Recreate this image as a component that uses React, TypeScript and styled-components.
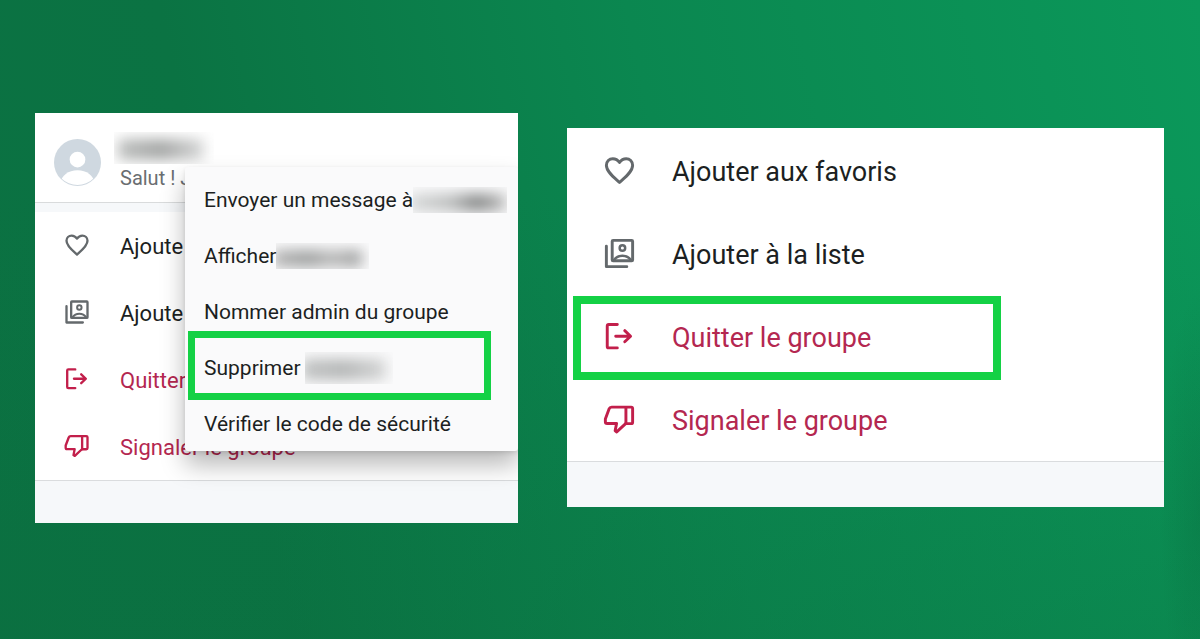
import React from "react";
import styled, { createGlobalStyle } from "styled-components";

const GlobalStyle = createGlobalStyle`
  *, *::before, *::after { box-sizing: border-box; }
  body { margin: 0; font-family: Roboto, "Liberation Sans", sans-serif; }
`;

const Page = styled.main`
  min-height: 100vh;
  display: grid;
  grid-template-columns: 483fr 597fr;
  gap: 49px;
  align-items: center;
  padding: 0 36px 4px 35px;
  background:
    radial-gradient(ellipse 40px 220px at 100% 80%, rgba(8, 96, 54, 0.25), transparent),
    linear-gradient(to top, rgba(10, 110, 62, 0.3), transparent 70%),
    linear-gradient(78deg, #0b7142 0%, #0b7343 22%, #0b8750 57%, #0b985a 100%);
`;

const Card = styled.section`
  position: relative;
  background: #fff;
  overflow: hidden;
`;

const Contact = styled.header`
  display: flex;
  gap: 13px;
  height: 90px;
  padding: 19px 0 0 19px;
  border-bottom: 1px solid #d9dbdc;
`;

const Band = styled.div<{ $height: number; $line?: boolean }>`
  height: ${(p) => p.$height}px;
  background: #f6f8fa;
  border-top: ${(p) => (p.$line ? "1px solid #dadcde" : "0")};
`;

const AvatarIcon = styled.svg`
  width: 47px;
  height: 47px;
  margin-top: 7px;
`;

const Status = styled.p`
  margin: 2px 0 0 6px;
  font-size: 20px;
  line-height: 24px;
  color: #6a6e71;
`;

const Redacted = styled.span<{ $width: number; $height: number }>`
  display: block;
  flex: none;
  overflow: hidden;
  width: ${(p) => p.$width}px;
  height: ${(p) => p.$height}px;
`;

const Smudge = styled.span<{ $from: number; $to: number; $tone: string }>`
  display: block;
  height: 66%;
  margin: 7px ${(p) => 100 - p.$to}% 0 ${(p) => p.$from}%;
  background: ${(p) => p.$tone};
  filter: blur(7px);
`;

const List = styled.ul<{ $top?: number }>`
  list-style: none;
  margin: 0;
  padding: ${(p) => p.$top ?? 0}px 0 0;
`;

const Item = styled.li`
  position: relative;
`;

const Action = styled.button<{ $large?: boolean; $danger?: boolean }>`
  display: flex;
  align-items: center;
  width: 100%;
  height: ${(p) => (p.$large ? 83 : 67)}px;
  gap: ${(p) => (p.$large ? 35 : 29)}px;
  padding: ${(p) => (p.$large ? "2px 0 0 35px" : "2px 0 0 28px")};
  border: 0;
  background: none;
  font: inherit;
  font-size: ${(p) => (p.$large ? 27 : 22)}px;
  white-space: nowrap;
  text-align: left;
  color: ${(p) => (p.$danger ? "#b42750" : "#1c1f22")};

  svg {
    flex: none;
    width: ${(p) => (p.$large ? 35 : 28)}px;
    height: ${(p) => (p.$large ? 35 : 28)}px;
    margin-bottom: 2px;
    color: ${(p) => (p.$danger ? "#c21f4b" : "#64696c")};
  }
`;

const Menu = styled.ul`
  position: absolute;
  top: 54px;
  left: 150px;
  right: 0;
  margin: 0;
  padding: 4px 0 0;
  list-style: none;
  background: #fafafb;
  border-radius: 3px;
  box-shadow: 0 14px 24px rgba(0, 0, 0, 0.28), 0 2px 4px rgba(0, 0, 0, 0.1);
`;

const MenuItem = styled.button<{ $gap?: number }>`
  display: flex;
  align-items: center;
  gap: ${(p) => p.$gap ?? 0}px;
  width: 100%;
  height: 56px;
  padding: 2px 0 0 19px;
  border: 0;
  background: none;
  font: inherit;
  font-size: 21px;
  white-space: nowrap;
  text-align: left;
  color: #1c1f22;
`;

const Highlight = styled.span<{ $inset: string; $weight: number }>`
  position: absolute;
  inset: ${(p) => p.$inset};
  border: ${(p) => p.$weight}px solid #14d145;
  pointer-events: none;
`;

const iconProps = {
  viewBox: "0 0 24 24",
  fill: "none",
  stroke: "currentColor",
  strokeWidth: 2,
  strokeLinecap: "round" as const,
  strokeLinejoin: "round" as const,
  "aria-hidden": true,
};

const HeartIcon = () => (
  <svg {...iconProps}>
    <path d="M12 20.2C8.5 17 3 12.9 3 8.4C3 5.8 5 3.9 7.4 3.9C9.3 3.9 10.9 4.9 12 6.5C13.1 4.9 14.7 3.9 16.6 3.9C19 3.9 21 5.8 21 8.4C21 12.9 15.5 17 12 20.2Z" />
  </svg>
);

const ListIcon = () => (
  <svg {...iconProps}>
    <rect x="7" y="3" width="14" height="14" rx="0.6" />
    <path d="M3 7V21H17" />
    <circle cx="14" cy="8.2" r="1.9" strokeWidth="1.7" />
    <path d="M8.3 16.4C9.5 14.5 11.5 13.5 14 13.5S18.5 14.5 19.7 16.4" strokeWidth="1.8" />
  </svg>
);

const LeaveIcon = () => (
  <svg {...iconProps}>
    <path d="M10.5 3.8H4.6C4 3.8 3.6 4.2 3.6 4.8V18.8C3.6 19.4 4 19.8 4.6 19.8H10.5" />
    <path d="M9.4 11.8H19.2M15.6 8L19.6 11.8L15.6 15.6" />
  </svg>
);

const ReportIcon = () => (
  <svg {...iconProps}>
    <path d="M20 3.5H6.6C5.7 3.5 5.2 3.9 4.9 4.7L2.3 11.6V13.5C2.3 14.2 2.8 14.7 3.5 14.7H10L9 19.8L10.1 20.5L16.2 14.8H20C20.6 14.8 21 14.4 21 13.8V4.5C21 3.9 20.6 3.5 20 3.5Z" />
    <path d="M16.4 3.7V14.7" />
  </svg>
);

const actions = [
  { label: "Ajouter aux favoris", short: "Ajoute", Icon: HeartIcon, danger: false },
  { label: "Ajouter à la liste", short: "Ajoute", Icon: ListIcon, danger: false },
  { label: "Quitter le groupe", short: "Quitter", Icon: LeaveIcon, danger: true },
  { label: "Signaler le groupe", short: "Signaler le groupe", Icon: ReportIcon, danger: true },
];

const Actions = ({ large, highlighted }: { large?: boolean; highlighted?: string }) => (
  <List $top={large ? 1 : 0}>
    {actions.map(({ label, short, Icon, danger }) => (
      <Item key={label}>
        <Action type="button" $large={large} $danger={danger}>
          <Icon />
          {large ? label : short}
        </Action>
        {label === highlighted && <Highlight $inset="1px 163px -2px 6px" $weight={8} />}
      </Item>
    ))}
  </List>
);

export default function App() {
  return (
    <>
      <GlobalStyle />
      <Page>
        <Card>
          <Contact>
            <AvatarIcon viewBox="0 0 48 48" aria-hidden>
              <defs>
                <clipPath id="disc">
                  <circle cx="24" cy="24" r="23" />
                </clipPath>
              </defs>
              <circle cx="24" cy="24" r="24" fill="#cfd8e0" />
              <circle cx="24" cy="21" r="8" fill="#fff" />
              <ellipse cx="24" cy="45" rx="17" ry="13" fill="#fff" clipPath="url(#disc)" />
            </AvatarIcon>
            <div>
              <Redacted $width={100} $height={32}>
                <Smudge $from={4} $to={90} $tone="linear-gradient(90deg, #bdbfbe, #a3a5a4 50%, #d6d7d7)" />
              </Redacted>
              <Status>Salut ! J</Status>
            </div>
          </Contact>
          <Band $height={9} />
          <Actions />
          <Band $height={43} $line />
          <Menu>
            <Item>
              <MenuItem type="button">
                Envoyer un message à
                <Redacted $width={94} $height={26}>
                  <Smudge $from={-4} $to={99} $tone="linear-gradient(90deg, #d8dada, #b8baba 45%, #808282 70%, #c0c0c0)" />
                </Redacted>
              </MenuItem>
            </Item>
            <Item>
              <MenuItem type="button">
                Afficher
                <Redacted $width={93} $height={26}>
                  <Smudge $from={-4} $to={92} $tone="linear-gradient(90deg, #b4b4b4, #9b9d9d 40%, #b8b8b8 65%, #9d9f9f)" />
                </Redacted>
              </MenuItem>
            </Item>
            <Item>
              <MenuItem type="button">Nommer admin du groupe</MenuItem>
            </Item>
            <Item>
              <MenuItem type="button" $gap={4}>
                Supprimer
                <Redacted $width={88} $height={32}>
                  <Smudge $from={-3} $to={92} $tone="linear-gradient(90deg, #c0c2c2, #b4b6b6 50%, #d4d5d5)" />
                </Redacted>
              </MenuItem>
              <Highlight $inset="-8px 27px -5px 3px" $weight={7} />
            </Item>
            <Item>
              <MenuItem type="button">Vérifier le code de sécurité</MenuItem>
            </Item>
          </Menu>
        </Card>
        <Card>
          <Actions large highlighted="Quitter le groupe" />
          <Band $height={46} $line />
        </Card>
      </Page>
    </>
  );
}
